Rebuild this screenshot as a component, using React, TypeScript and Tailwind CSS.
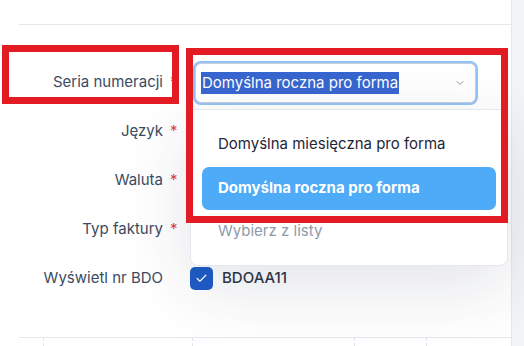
import { ChevronDown, Check } from "lucide-react";

const rows = [
  { label: "Język", req: true },
  { label: "Waluta", req: true },
  { label: "Typ faktury", req: true },
];

function Label({ text, req }: { text: string; req?: boolean }) {
  return (
    <div className="flex justify-end items-center pr-[2px] text-[15px] text-[#3c4b61]">
      <span>{text}</span>
      <span className={req ? "ml-[7px] w-[6px] text-[#d9434a]" : "ml-[7px] w-[6px]"}>{req ? "*" : ""}</span>
    </div>
  );
}

export default function App() {
  return (
    <div className="w-[524px] h-[346px] overflow-hidden bg-white flex font-['Inter',sans-serif] relative">
      <div className="flex-1 flex flex-col pl-[19px]">
        <div className="h-[25px] border-b border-[#e6e7ef] shrink-0"></div>

        <div className="mt-[33px] flex flex-col">
          {/* Seria numeracji */}
          <div className="h-[49px] grid grid-cols-[159px_1fr] items-center">
            <Label text="Seria numeracji" req />
            <div className="pl-[17px] relative">
              <div className="w-[281px] h-[40px] rounded-[6px] border border-[#c9ced8] ring-2 ring-[#92c3f8] bg-white flex items-center pl-[5px] pr-[9px]">
                <span className="bg-[#3866d0] text-white text-[15px] leading-[22px] px-[1px]">
                  Domyślna roczna pro forma
                </span>
                <ChevronDown className="ml-auto text-[#8a94a3]" size={12} strokeWidth={2} />
              </div>

              {/* dropdown */}
              <div className="absolute left-[12px] top-[46px] w-[318px] h-[157px] bg-white border border-[#e5e7ee] rounded-b-[8px] shadow-[0_20px_70px_rgba(30,40,70,0.13)] z-10 pt-[13px] px-[11px] flex flex-col">
                <div className="h-[44px] flex items-center pl-[16px] text-[15px] text-[#1f2636]">
                  Domyślna miesięczna pro forma
                </div>
                <div className="h-[43px] flex items-center pl-[16px] rounded-[7px] bg-[#4eabf7] text-white text-[15px] font-bold">
                  Domyślna roczna pro forma
                </div>
                <div className="h-[44px] flex items-center pl-[16px] text-[15px] text-[#8e9aab]">
                  Wybierz z listy
                </div>
              </div>
            </div>
          </div>

          {rows.map((r) => (
            <div key={r.label} className="h-[49px] grid grid-cols-[159px_1fr] items-center">
              <Label text={r.label} req={r.req} />
              <div></div>
            </div>
          ))}

          <div className="h-[49px] grid grid-cols-[159px_1fr] items-center">
            <Label text="Wyświetl nr BDO" />
            <div className="pl-[12px] flex items-center gap-[9px]">
              <div className="w-[23px] h-[23px] rounded-[5px] bg-[#1e5cc6] flex items-center justify-center">
                <Check className="text-white" size={13} strokeWidth={2.25} />
              </div>
              <span className="text-[15px] font-medium text-[#2b3648]">BDOAA11</span>
            </div>
          </div>
        </div>

        <div className="mt-auto h-[9px] border-t border-[#e6e7ef] flex shrink-0">
          <div className="w-[24px]"></div>
          <div className="w-[149px] border-l border-dashed border-[#e3e5ec]"></div>
          <div className="w-[162px] border-l border-dashed border-[#e3e5ec]"></div>
          <div className="w-[72px] border-l border-dashed border-[#e3e5ec]"></div>
          <div className="flex-1 border-l border-dashed border-[#e3e5ec]"></div>
        </div>
      </div>

      <div className="w-[13px] shrink-0 bg-[#f3f4f8] border-l border-[#e6e7ee]"></div>

      {/* annotation boxes */}
      <div className="absolute left-[2px] top-[45px] w-[177px] h-[59px] border-[7px] border-[#e31b23] z-20"></div>
      <div className="absolute left-[186px] top-[48px] w-[322px] h-[175px] border-[7px] border-[#e31b23] z-20"></div>
    </div>
  );
}
